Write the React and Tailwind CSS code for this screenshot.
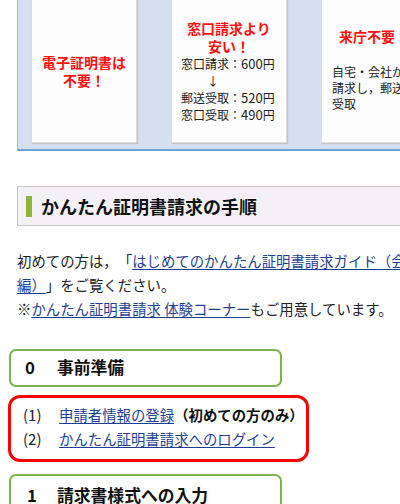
import React from "react";

const F = "font-['Noto_Sans_CJK_JP','Noto_Sans',sans-serif]";

function Card({ className, children }) {
  return (
    <div
      className={`shrink-0 h-[153px] bg-[#fdfdfd] border border-[#dcdcdc] shadow-[1px_1px_1px_#c4c4c4] ${className}`}
    >
      {children}
    </div>
  );
}

export default function App() {
  return (
    <div className={`w-[400px] h-[504px] overflow-hidden bg-white text-[#222] [text-spacing-trim:space-all] ${F}`}>
      {/* top blue panel */}
      <div className="-mt-[10px] ml-[17px] w-[430px] bg-[#d5dff0] border-l border-[#9cbde6] border-b-2 border-b-[#6ea3da] flex gap-[34px] pl-[13px] pb-[6px]">
        <Card className="w-[106px] pt-[62px] text-center">
          <div className="text-[14px] leading-[18px] font-bold text-[#ff1010]">
            電子証明書は
            <br />
            不要！
          </div>
        </Card>
        <Card className="w-[116px] pt-[28px] pl-[9px] pr-[9px]">
          <div className="text-center text-[14px] leading-[18px] font-bold text-[#ff1010]">
            窓口請求より
            <br />
            安い！
          </div>
          <div className="text-[12px] leading-[17px] whitespace-nowrap">
            <div>窓口請求：<span className="text-[13px]">600</span>円</div>
            <div className="pl-[26px]">↓</div>
            <div>郵送受取：<span className="text-[13px]">520</span>円</div>
            <div>窓口受取：<span className="text-[13px]">490</span>円</div>
          </div>
        </Card>
        <Card className="w-[120px] pt-[36px] pl-[10px]">
          <div className="pl-[7px] text-[14px] leading-[18px] font-bold text-[#ff1010]">
            来庁不要
          </div>
          <div className="mt-[19px] text-[12px] leading-[16px] whitespace-nowrap">
            <div>自宅・会社から</div>
            <div>請求し，郵送で</div>
            <div>受取</div>
          </div>
        </Card>
      </div>

      {/* heading */}
      <div className="mt-[35px] ml-[17px] w-[420px] h-[40px] bg-[#f3f1f5] border border-[#c8c8c8] flex items-center pl-[8px] gap-[9px]">
        <div className="w-[6px] h-[21px] bg-[#8cb33a]" />
        <div className="text-[18px] font-bold text-[#111] leading-none whitespace-nowrap">
          かんたん証明書請求の手順
        </div>
      </div>

      {/* paragraph */}
      <div className="mt-[23px] pl-[17px] text-[14.4px] leading-[24px] whitespace-nowrap">
        <div>
          初めての方は，「
          <a className="text-[#1d3f93] underline underline-offset-2">
            はじめてのかんたん証明書請求ガイド（会
          </a>
        </div>
        <div>
          <a className="text-[#1d3f93] underline underline-offset-2">編）</a>
          」をご覧ください。
        </div>
        <div>
          ※
          <a className="text-[#1d3f93] underline underline-offset-2">
            かんたん証明書請求 体験コーナー
          </a>
          もご用意しています。
        </div>
      </div>

      {/* step 0 */}
      <div className="mt-[28px] ml-[9px] w-[273px] h-[38px] border-2 border-[#7db44a] rounded-[7px] flex items-center pl-[14px] text-[16.8px] font-bold text-[#111]">
        <span className="w-[32px]">0</span>
        <span>事前準備</span>
      </div>

      {/* red box */}
      <div className="mt-[8px] ml-[8px] w-[301px] border-[3px] border-[#ff0000] rounded-[12px] pt-[5px] pb-[8px] pl-[12px] text-[14.4px] leading-[24px] whitespace-nowrap">
        <div className="flex">
          <span className="w-[36px] text-[15px]">(1)</span>
          <a className="text-[#1d3f93] underline underline-offset-2">申請者情報の登録</a>
          <span className="font-bold text-[#111]">（初めての方のみ）</span>
        </div>
        <div className="flex">
          <span className="w-[36px] text-[15px]">(2)</span>
          <a className="text-[#1d3f93] underline underline-offset-2">
            かんたん証明書請求へのログイン
          </a>
        </div>
      </div>

      {/* step 1 */}
      <div className="mt-[12px] ml-[9px] w-[273px] h-[50px] border-2 border-[#7db44a] rounded-[7px] flex items-start pt-[7px] pl-[16px] text-[16.8px] font-bold text-[#111]">
        <span className="w-[30px]">1</span>
        <span>請求書様式への入力</span>
      </div>
    </div>
  );
}
